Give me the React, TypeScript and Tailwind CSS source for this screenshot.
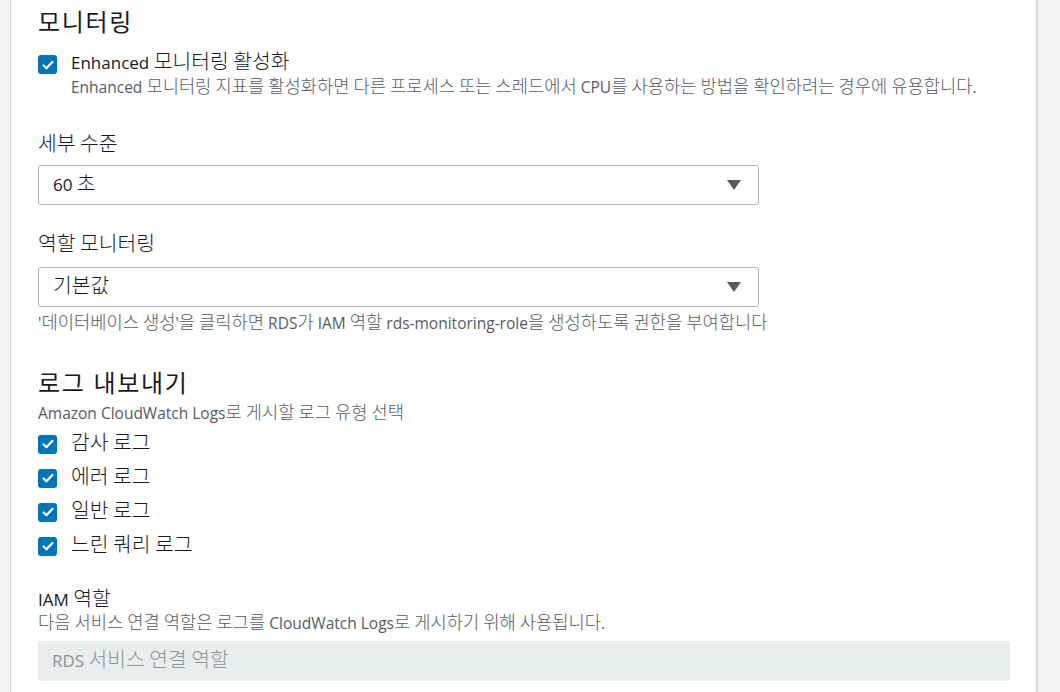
import { ReactNode } from 'react'

const font = { fontFamily: '"Open Sans", "Noto Sans CJK KR", sans-serif' }

// Hangul falls back to a larger, lighter face than the Latin text
function K({ children, big }: { children: string; big?: boolean }) {
  const cls = big ? 'text-[1.2em] leading-none font-light' : 'text-[1.14em] leading-none font-light'
  return (
    <>
      {children.split(/([\uAC00-\uD7A3]+)/).map((part, i) =>
        /[\uAC00-\uD7A3]/.test(part) ? (
          <span key={i} className={cls}>
            {part}
          </span>
        ) : (
          part
        )
      )}
    </>
  )
}

function Check() {
  return (
    <span className="flex h-[19px] w-[19px] shrink-0 items-center justify-center rounded-[3px] bg-[#0073bb]">
      <svg viewBox="0 0 16 16" className="h-[14px] w-[14px]" fill="none">
        <path d="M3 8.5l3.2 3.2L13 4.5" stroke="white" strokeWidth="2.6" strokeLinecap="round" strokeLinejoin="round" />
      </svg>
    </span>
  )
}

function CheckRow({ children }: { children: string }) {
  return (
    <div className="flex h-[34px] items-center gap-[14px]">
      <Check />
      <span className="text-[17px] leading-[26px] text-[#16191f]">
        <K big>{children}</K>
      </span>
    </div>
  )
}

function Label({ children, className }: { children: string; className?: string }) {
  return (
    <div className={`whitespace-nowrap text-[17px] leading-[26px] text-[#16191f] ${className ?? ''}`}>
      <K big>{children}</K>
    </div>
  )
}

function Hint({ children, className }: { children: string; className?: string }) {
  return (
    <div className={`whitespace-nowrap text-[15.5px] leading-[20px] text-[#545b64] ${className ?? ''}`}>
      <K>{children}</K>
    </div>
  )
}

function Select({ value }: { value: string }) {
  return (
    <div className="flex h-[40px] w-[721px] items-center justify-between rounded-[3px] border border-[#aab7b8] bg-white pl-[14px] pr-[16px]">
      <span className="text-[17px] leading-[26px] text-[#16191f]">
        <K big>{value}</K>
      </span>
      <svg viewBox="0 0 16 12" className="h-[12px] w-[16px]">
        <path d="M1 1h14L8 11z" fill="#545b64" />
      </svg>
    </div>
  )
}

function Heading({ children, className }: { children: ReactNode; className?: string }) {
  return (
    <h2 className={`text-[24px] leading-[36px] tracking-[0.07em] text-[#16191f] ${className ?? ''}`}>{children}</h2>
  )
}

export default function App() {
  return (
    <div className="flex h-[692px] w-[1060px] overflow-hidden bg-[#f2f3f3]" style={font}>
      <div className="w-[11px] border-r border-[#d5dbdb]" />
      <div className="w-[1027px] border-r-2 border-[#d5dbdb] bg-white pl-[27px] pr-[27px]">
        {/* Monitoring */}
        <Heading className="pt-[4px]">모니터링</Heading>
        <div className="mt-[10px] flex items-start gap-[14px]">
          <div className="pt-[5px]">
            <Check />
          </div>
          <div>
            <Label>Enhanced 모니터링 활성화</Label>
            <Hint className="mt-[1px]">
              Enhanced 모니터링 지표를 활성화하면 다른 프로세스 또는 스레드에서 CPU를 사용하는 방법을 확인하려는 경우에 유용합니다.
            </Hint>
          </div>
        </div>

        <Label className="mt-[35px]">세부 수준</Label>
        <div className="mt-[7px]">
          <Select value="60 초" />
        </div>

        <Label className="mt-[27px]">역할 모니터링</Label>
        <div className="mt-[9px]">
          <Select value="기본값" />
        </div>
        <Hint className="mt-[6px]">
          '데이터베이스 생성'을 클릭하면 RDS가 IAM 역할 rds-monitoring-role을 생성하도록 권한을 부여합니다
        </Hint>

        {/* Log exports */}
        <Heading className="mt-[32px]">로그 내보내기</Heading>
        <Hint className="mt-[2px]">Amazon CloudWatch Logs로 게시할 로그 유형 선택</Hint>
        <div className="mt-[4px]">
          <CheckRow>감사 로그</CheckRow>
          <CheckRow>에러 로그</CheckRow>
          <CheckRow>일반 로그</CheckRow>
          <CheckRow>느린 쿼리 로그</CheckRow>
        </div>

        <Label className="mt-[24px]">IAM 역할</Label>
        <Hint>다음 서비스 연결 역할은 로그를 CloudWatch Logs로 게시하기 위해 사용됩니다.</Hint>
        <div className="mt-[8px] flex h-[40px] w-[972px] items-center rounded-[3px] bg-[#eaeded] pl-[14px]">
          <span className="text-[17px] leading-[26px] text-[#879596]">
            <K big>RDS 서비스 연결 역할</K>
          </span>
        </div>
      </div>
    </div>
  )
}
